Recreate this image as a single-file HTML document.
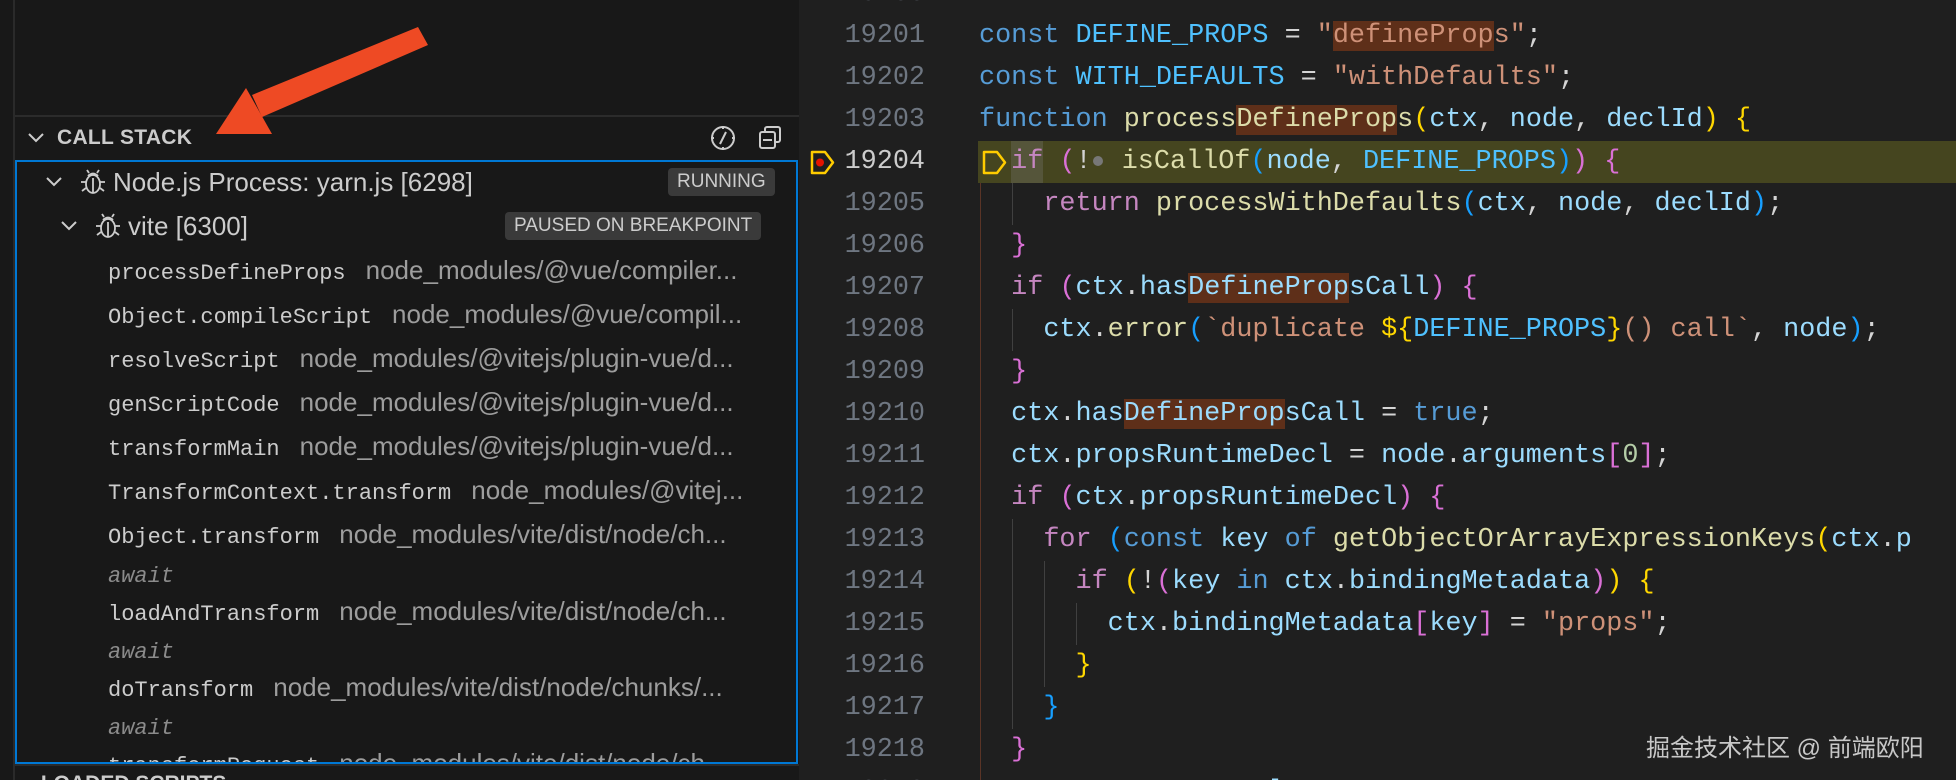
<!DOCTYPE html>
<html><head><meta charset="utf-8">
<style>
*{margin:0;padding:0;box-sizing:border-box}
html,body{width:1956px;height:780px;overflow:hidden}
body{background:#1f1f1f;position:relative;font-family:"Liberation Sans",sans-serif}
#root{position:absolute;left:0;top:0;width:1956px;height:780px;overflow:hidden;background:#1f1f1f}
#side{position:absolute;left:0;top:0;width:799px;height:780px;background:#181818;overflow:hidden}
#strip{position:absolute;left:0;top:0;width:15px;height:780px;background:#181818;border-right:2px solid #2a2a2a}
.sep{position:absolute;left:15px;width:784px;height:2px;background:#2b2b2b}
#hdr{position:absolute;left:17px;top:122px;width:782px;height:34px;color:#cccccc;font-weight:bold;font-size:21px}
#box{position:absolute;left:15px;top:160px;width:783px;height:604px;border:2px solid #0078d4;overflow:hidden}
.row{position:absolute;left:0;height:40px;line-height:40px;white-space:nowrap;color:#cccccc;font-size:26px}
.fn{font-family:"Liberation Mono",monospace;font-size:22px;color:#cccccc}
.path{color:#9d9d9d;font-size:26px;margin-left:20px}
.aw{font-family:"Liberation Mono",monospace;font-size:22px;color:#8b8b8b;font-style:italic}
.badge{position:absolute;background:#3a3a3a;color:#cccccc;font-size:19px;border-radius:4px;height:28px;line-height:28px;padding:0 9px}
.ln{position:absolute;left:799px;width:126px;text-align:right;font-family:"Liberation Mono",monospace;font-size:26.8px;color:#6e7681;height:42px;line-height:42px}
.cl{position:absolute;left:979px;font-family:"Liberation Mono",monospace;font-size:26.8px;color:#d4d4d4;height:42px;line-height:42px;white-space:pre}
.k{color:#569cd6}.c{color:#c586c0}.v{color:#9cdcfe}.n{color:#4fc1ff}.s{color:#ce9178}.f{color:#dcdcaa}.y{color:#ffd700}.m{color:#da70d6}.b{color:#179fff}.num{color:#b5cea8}
.hl{background:#5e2f19}
.guide{position:absolute;width:1px;background:#404040}
</style></head><body>
<div id="root">
<div id="side">
<div id="strip"></div>
<div class="sep" style="top:115px"></div>
<div id="hdr">
 <svg style="position:absolute;left:10px;top:10px" width="18" height="12" viewBox="0 0 18 12"><path d="M2 2 L9 9 L16 2" stroke="#cccccc" stroke-width="2" fill="none"/></svg>
 <span style="position:absolute;left:40px;top:4px;letter-spacing:0.3px">CALL STACK</span>
 <svg style="position:absolute;left:692px;top:2px" width="28" height="28" viewBox="0 0 28 28"><circle cx="14" cy="14" r="11" stroke="#cccccc" stroke-width="2" fill="none"/><path d="M17 8 L11 20" stroke="#cccccc" stroke-width="2"/><path d="M14 2v3M14 23v3M2 14h3M23 14h3" stroke="#cccccc" stroke-width="2"/></svg>
 <svg style="position:absolute;left:740px;top:3px" width="26" height="26" viewBox="0 0 26 26"><rect x="8" y="2" width="15" height="15" rx="2" stroke="#cccccc" stroke-width="2" fill="none"/><rect x="3" y="7" width="15" height="16" rx="2" stroke="#cccccc" stroke-width="2" fill="#181818"/><path d="M6 15h9" stroke="#cccccc" stroke-width="2"/></svg>
</div>
<div class="sep" style="top:764px"></div>
<div style="position:absolute;left:28px;top:772px;color:#cccccc;font-weight:bold;font-size:21px;white-space:nowrap">› LOADED SCRIPTS</div>
<div id="box">
 <div class="row" style="top:0px;width:779px">
  <svg style="position:absolute;left:28px;top:14px" width="18" height="12" viewBox="0 0 18 12"><path d="M2 2 L9 9 L16 2" stroke="#cccccc" stroke-width="2" fill="none"/></svg>
  <svg style="position:absolute;left:62px;top:6px" width="28" height="28" viewBox="0 0 28 28"><g stroke="#cccccc" stroke-width="1.8" fill="none"><ellipse cx="14" cy="16" rx="7" ry="9"/><path d="M9 8 Q14 3 19 8"/><path d="M10 5l-2-3M18 5l2-3M7 14H2M21 14h5M7 20l-4 3M21 20l4 3M14 10v15"/></g></svg>
  <span style="position:absolute;left:96px">Node.js Process: yarn.js [6298]</span>
  <div class="badge" style="left:651px;top:6px">RUNNING</div>
 </div>
 <div class="row" style="top:44px;width:779px">
  <svg style="position:absolute;left:43px;top:14px" width="18" height="12" viewBox="0 0 18 12"><path d="M2 2 L9 9 L16 2" stroke="#cccccc" stroke-width="2" fill="none"/></svg>
  <svg style="position:absolute;left:77px;top:6px" width="28" height="28" viewBox="0 0 28 28"><g stroke="#cccccc" stroke-width="1.8" fill="none"><ellipse cx="14" cy="16" rx="7" ry="9"/><path d="M9 8 Q14 3 19 8"/><path d="M10 5l-2-3M18 5l2-3M7 14H2M21 14h5M7 20l-4 3M21 20l4 3M14 10v15"/></g></svg>
  <span style="position:absolute;left:111px">vite [6300]</span>
  <div class="badge" style="left:488px;top:6px">PAUSED ON BREAKPOINT</div>
 </div>
 <div class="row" style="top:88px;left:91px"><span class="fn">processDefineProps</span><span class="path">node_modules/@vue/compiler...</span></div>
 <div class="row" style="top:132px;left:91px"><span class="fn">Object.compileScript</span><span class="path">node_modules/@vue/compil...</span></div>
 <div class="row" style="top:176px;left:91px"><span class="fn">resolveScript</span><span class="path">node_modules/@vitejs/plugin-vue/d...</span></div>
 <div class="row" style="top:220px;left:91px"><span class="fn">genScriptCode</span><span class="path">node_modules/@vitejs/plugin-vue/d...</span></div>
 <div class="row" style="top:264px;left:91px"><span class="fn">transformMain</span><span class="path">node_modules/@vitejs/plugin-vue/d...</span></div>
 <div class="row" style="top:308px;left:91px"><span class="fn">TransformContext.transform</span><span class="path">node_modules/@vitej...</span></div>
 <div class="row" style="top:352px;left:91px"><span class="fn">Object.transform</span><span class="path">node_modules/vite/dist/node/ch...</span></div>
 <div class="row" style="top:391px;left:91px"><span class="aw">await</span></div>
 <div class="row" style="top:429px;left:91px"><span class="fn">loadAndTransform</span><span class="path">node_modules/vite/dist/node/ch...</span></div>
 <div class="row" style="top:467px;left:91px"><span class="aw">await</span></div>
 <div class="row" style="top:505px;left:91px"><span class="fn">doTransform</span><span class="path">node_modules/vite/dist/node/chunks/...</span></div>
 <div class="row" style="top:543px;left:91px"><span class="aw">await</span></div>
 <div class="row" style="top:581px;left:91px"><span class="fn">transformRequest</span><span class="path">node_modules/vite/dist/node/ch...</span></div>
</div>
<svg style="position:absolute;left:0;top:0" width="799" height="160"><path d="M418 27 L428 45 L262 117 L252 95 Z" fill="#ee4a24"/><path d="M216 134 L246 88 L272 134 Z" fill="#ee4a24"/></svg>
</div>

<div style="position:absolute;left:978px;top:141px;width:978px;height:42px;background:#45451f"></div>
<div style="position:absolute;left:1011px;top:141px;width:32px;height:42px;background:#55553a"></div>
<div class="guide" style="left:980px;top:183px;height:600px;background:#5a3426"></div>
<div class="guide" style="left:1012px;top:183px;height:42px"></div>
<div class="guide" style="left:1012px;top:309px;height:42px"></div>
<div class="guide" style="left:1012px;top:519px;height:210px"></div>
<div class="guide" style="left:1044px;top:561px;height:126px"></div>
<div class="guide" style="left:1076px;top:603px;height:42px"></div>

<svg style="position:absolute;left:810px;top:150px" width="26" height="25" viewBox="0 0 26 25"><path d="M2 2 H15 L23 12.5 L15 23 H2 Z" stroke="#ffcc00" stroke-width="2.5" fill="none" stroke-linejoin="round"/><circle cx="10" cy="12.5" r="4" fill="#e51400"/></svg>
<svg style="position:absolute;left:982px;top:150px" width="26" height="25" viewBox="0 0 26 25"><path d="M2 2 H15 L23 12.5 L15 23 H2 Z" stroke="#ffcc00" stroke-width="2.5" fill="none" stroke-linejoin="round"/></svg>

<div class="ln" style="top:-27px">19200</div>
<div class="ln" style="top:15px">19201</div>
<div class="ln" style="top:57px">19202</div>
<div class="ln" style="top:99px">19203</div>
<div class="ln" style="top:141px;color:#cccccc">19204</div>
<div class="ln" style="top:183px">19205</div>
<div class="ln" style="top:225px">19206</div>
<div class="ln" style="top:267px">19207</div>
<div class="ln" style="top:309px">19208</div>
<div class="ln" style="top:351px">19209</div>
<div class="ln" style="top:393px">19210</div>
<div class="ln" style="top:435px">19211</div>
<div class="ln" style="top:477px">19212</div>
<div class="ln" style="top:519px">19213</div>
<div class="ln" style="top:561px">19214</div>
<div class="ln" style="top:603px">19215</div>
<div class="ln" style="top:645px">19216</div>
<div class="ln" style="top:687px">19217</div>
<div class="ln" style="top:729px">19218</div>
<div class="ln" style="top:771px">19219</div>

<div class="cl" style="top:15px"><span class="k">const</span> <span class="n">DEFINE_PROPS</span> = <span class="s">"<span class="hl">defineProp</span>s"</span>;</div>
<div class="cl" style="top:57px"><span class="k">const</span> <span class="n">WITH_DEFAULTS</span> = <span class="s">"withDefaults"</span>;</div>
<div class="cl" style="top:99px"><span class="k">function</span> <span class="f">process<span class="hl">DefineProp</span>s</span><span class="y">(</span><span class="v">ctx</span>, <span class="v">node</span>, <span class="v">declId</span><span class="y">)</span> <span class="y">{</span></div>
<div class="cl" style="top:141px">  <span class="c">if</span> <span class="m">(</span>!<span style="display:inline-block;width:10px;height:10px;border-radius:5px;background:#777;margin:0 3px 2px 1px"></span> <span class="f">isCallOf</span><span class="b">(</span><span class="v">node</span>, <span class="n">DEFINE_PROPS</span><span class="b">)</span><span class="m">)</span> <span class="m">{</span></div>
<div class="cl" style="top:183px">    <span class="c">return</span> <span class="f">processWithDefaults</span><span class="b">(</span><span class="v">ctx</span>, <span class="v">node</span>, <span class="v">declId</span><span class="b">)</span>;</div>
<div class="cl" style="top:225px">  <span class="m">}</span></div>
<div class="cl" style="top:267px">  <span class="c">if</span> <span class="m">(</span><span class="v">ctx</span>.<span class="v">has<span class="hl">DefineProp</span>sCall</span><span class="m">)</span> <span class="m">{</span></div>
<div class="cl" style="top:309px">    <span class="v">ctx</span>.<span class="f">error</span><span class="b">(</span><span class="s">`duplicate </span><span class="y">${</span><span class="n">DEFINE_PROPS</span><span class="y">}</span><span class="s">() call`</span>, <span class="v">node</span><span class="b">)</span>;</div>
<div class="cl" style="top:351px">  <span class="m">}</span></div>
<div class="cl" style="top:393px">  <span class="v">ctx</span>.<span class="v">has<span class="hl">DefineProp</span>sCall</span> = <span class="k">true</span>;</div>
<div class="cl" style="top:435px">  <span class="v">ctx</span>.<span class="v">propsRuntimeDecl</span> = <span class="v">node</span>.<span class="v">arguments</span><span class="m">[</span><span class="num">0</span><span class="m">]</span>;</div>
<div class="cl" style="top:477px">  <span class="c">if</span> <span class="m">(</span><span class="v">ctx</span>.<span class="v">propsRuntimeDecl</span><span class="m">)</span> <span class="m">{</span></div>
<div class="cl" style="top:519px">    <span class="c">for</span> <span class="b">(</span><span class="k">const</span> <span class="v">key</span> <span class="k">of</span> <span class="f">getObjectOrArrayExpressionKeys</span><span class="y">(</span><span class="v">ctx</span>.<span class="v">p</span></div>
<div class="cl" style="top:561px">      <span class="c">if</span> <span class="y">(</span>!<span class="m">(</span><span class="v">key</span> <span class="k">in</span> <span class="v">ctx</span>.<span class="v">bindingMetadata</span><span class="m">)</span><span class="y">)</span> <span class="y">{</span></div>
<div class="cl" style="top:603px">        <span class="v">ctx</span>.<span class="v">bindingMetadata</span><span class="m">[</span><span class="v">key</span><span class="m">]</span> = <span class="s">"props"</span>;</div>
<div class="cl" style="top:645px">      <span class="y">}</span></div>
<div class="cl" style="top:687px">    <span class="b">}</span></div>
<div class="cl" style="top:729px">  <span class="m">}</span></div>
<div class="cl" style="top:771px">  <span class="v">ctx</span>.<span class="v">propsTypeDecl</span></div>

<div style="position:absolute;left:1646px;top:728px;color:#c8c8c8;font-size:24px;font-family:'Liberation Sans','Noto Sans CJK SC',sans-serif;white-space:nowrap">掘金技术社区 @ 前端欧阳</div>
</div>
</body></html>
